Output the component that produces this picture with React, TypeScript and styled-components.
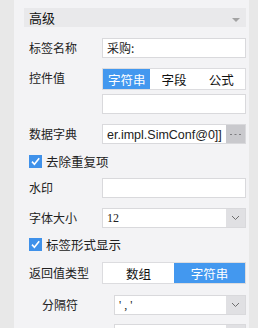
import * as React from 'react'
import styled, {createGlobalStyle} from 'styled-components'

const GlobalStyle = createGlobalStyle`
  html, body {
    margin: 0;
    padding: 0;
    background: #e8e8e8;
  }
  body {
    font-family: "Noto Sans CJK SC", "Microsoft YaHei", sans-serif;
    font-size: 12px;
    color: #222;
  }
`

const Frame = styled.div`
  display: flex;
  width: 258px;
  height: 328px;
  overflow: hidden;
  background: #e8e8e8;
`

const Panel = styled.div`
  width: 235px;
  margin-left: 14px;
  padding: 8px 3px 0 10px;
  box-sizing: border-box;
  background: #f3f3f5;
  display: flex;
  flex-direction: column;
`

const SectionHeader = styled.div`
  height: 19px;
  background: #e9e9eb;
  display: flex;
  align-items: center;
  justify-content: space-between;
  padding: 0 6px 0 5px;
  font-size: 13px;
  line-height: 19px;
  color: #111;
`

const Triangle = styled.div`
  width: 0;
  height: 0;
  border-left: 4px solid transparent;
  border-right: 4px solid transparent;
  border-top: 4px solid #a3a3a3;
  margin-top: 4px;
`

const Row = styled.div<{$gap: number; $indent?: boolean; $top?: boolean}>`
  display: flex;
  align-items: ${p => (p.$top ? 'flex-start' : 'center')};
  margin-top: ${p => p.$gap}px;
  padding-left: ${p => (p.$indent ? 18 : 5)}px;
`

const Label = styled.div<{$width?: number}>`
  width: ${p => p.$width ?? 73}px;
  flex: none;
  line-height: 20px;
  white-space: nowrap;
`

const Input = styled.div`
  flex: 1;
  height: 20px;
  box-sizing: border-box;
  border: 1px solid #d9d9dc;
  background: #fff;
  padding: 0 4px;
  line-height: 18px;
  white-space: nowrap;
  overflow: hidden;
`

const LatinText = styled.span`
  font-family: "Liberation Sans", Arial, sans-serif;
  font-size: 12.5px;
`

const Combo = styled.div`
  flex: 1;
  height: 20px;
  display: flex;
  box-sizing: border-box;
  border: 1px solid #d9d9dc;
  background: #fff;
`

const ComboText = styled.div<{$serif?: boolean; $spaced?: boolean}>`
  flex: 1;
  padding-left: 4px;
  line-height: 18px;
  overflow: hidden;
  white-space: nowrap;
  letter-spacing: ${p => (p.$spaced ? 3 : 0)}px;
  font-family: ${p => (p.$serif ? '"Liberation Serif", serif' : 'inherit')};
`

const SideButton = styled.div<{$dark?: boolean}>`
  width: 19px;
  flex: none;
  background: ${p => (p.$dark ? '#c9c9cd' : '#e0e0e3')};
  display: flex;
  align-items: center;
  justify-content: center;
  color: #777;
`

const Segmented = styled.div`
  flex: 1;
  height: 22px;
  display: flex;
  box-sizing: border-box;
  border: 1px solid #dcdcdf;
  background: #fff;
`

const Segment = styled.div<{$active?: boolean}>`
  flex: 1;
  display: flex;
  align-items: center;
  justify-content: center;
  font-size: 12.5px;
  background: ${p => (p.$active ? '#4398ef' : 'transparent')};
  color: ${p => (p.$active ? '#fff' : '#111')};
`

const CheckRow = styled.div<{$gap: number}>`
  display: flex;
  align-items: center;
  height: 20px;
  margin-top: ${p => p.$gap}px;
  padding-left: 5px;
  gap: 4px;
  font-size: 12.5px;
`

const Box = styled.div`
  width: 13px;
  height: 13px;
  background: #3f91ea;
  display: flex;
  align-items: center;
  justify-content: center;
`

const Check = () => (
  <Box>
    <svg width="11" height="11" viewBox="0 0 11 11">
      <path d="M2 5.6 L4.4 8.2 L9.2 2.2" fill="none" stroke="#fff" strokeWidth="1.6" />
    </svg>
  </Box>
)

const Chevron = () => (
  <svg width="9" height="6" viewBox="0 0 9 6">
    <path d="M1 1 L4.5 4.5 L8 1" fill="none" stroke="#6e6e6e" strokeWidth="1" />
  </svg>
)

const Dots = () => (
  <svg width="11" height="3" viewBox="0 0 11 3">
    <rect x="0" y="1" width="2" height="1" fill="#7d7d80" />
    <rect x="4.5" y="1" width="2" height="1" fill="#7d7d80" />
    <rect x="9" y="1" width="2" height="1" fill="#7d7d80" />
  </svg>
)

export default function App() {
  return (
    <Frame>
      <GlobalStyle />
      <Panel>
        <SectionHeader>
          高级
          <Triangle />
        </SectionHeader>

        <Row $gap={11}>
          <Label>标签名称</Label>
          <Input>采购:</Input>
        </Row>

        <Row $gap={10} $top>
          <Label>控件值</Label>
          <Segmented>
            <Segment $active>字符串</Segment>
            <Segment>字段</Segment>
            <Segment>公式</Segment>
          </Segmented>
        </Row>

        <Row $gap={4}>
          <Label />
          <Input />
        </Row>

        <Row $gap={10}>
          <Label>数据字典</Label>
          <Combo>
            <ComboText><LatinText>er.impl.SimConf@0]]</LatinText></ComboText>
            <SideButton $dark><Dots /></SideButton>
          </Combo>
        </Row>

        <CheckRow $gap={8}>
          <Check />
          去除重复项
        </CheckRow>

        <Row $gap={7}>
          <Label>水印</Label>
          <Input />
        </Row>

        <Row $gap={10}>
          <Label>字体大小</Label>
          <Combo>
            <ComboText $serif>12</ComboText>
            <SideButton><Chevron /></SideButton>
          </Combo>
        </Row>

        <CheckRow $gap={7}>
          <Check />
          标签形式显示
        </CheckRow>

        <Row $gap={8}>
          <Label>返回值类型</Label>
          <Segmented>
            <Segment>数组</Segment>
            <Segment $active>字符串</Segment>
          </Segmented>
        </Row>

        <Row $gap={11} $indent>
          <Label $width={72}>分隔符</Label>
          <Combo>
            <ComboText $serif $spaced>','</ComboText>
            <SideButton><Chevron /></SideButton>
          </Combo>
        </Row>

        <Row $gap={9} $indent>
          <Label $width={72} />
          <Combo>
            <ComboText />
            <SideButton><Chevron /></SideButton>
          </Combo>
        </Row>
      </Panel>
    </Frame>
  )
}
